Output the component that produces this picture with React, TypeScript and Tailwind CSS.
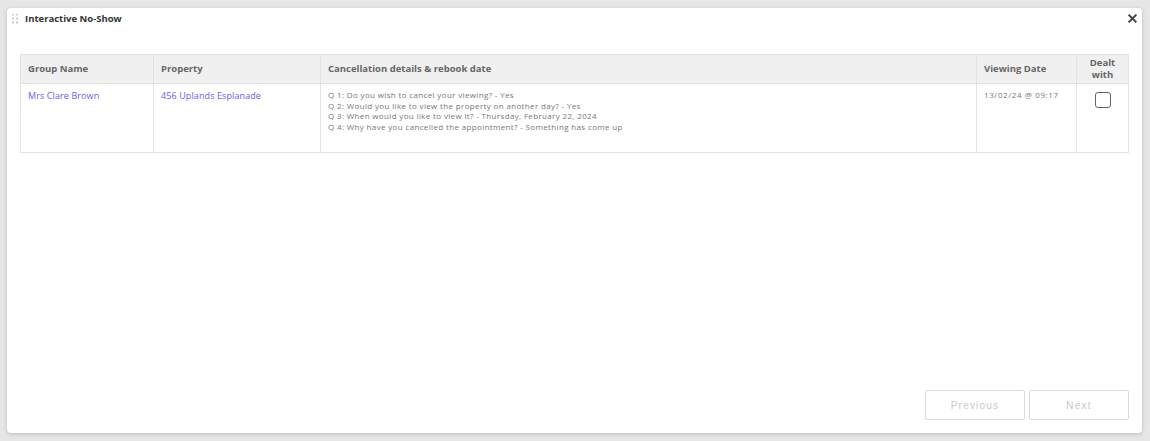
const font = { fontFamily: '"Open Sans", "Noto Sans", sans-serif' };

function DragHandle() {
  return (
    <svg width="6" height="10" viewBox="0 0 6 10" className="mr-[7px]">
      {[0, 1, 2].map((r) =>
        [0, 1].map((c) => (
          <rect key={`${r}-${c}`} x={c * 4} y={r * 4 - 0.5} width="2" height="2" fill="#c8c8c8" />
        ))
      )}
    </svg>
  );
}

const questions = [
  "Q 1: Do you wish to cancel your viewing? - Yes",
  "Q 2: Would you like to view the property on another day? - Yes",
  "Q 3: When would you like to view it? - Thursday, February 22, 2024",
  "Q 4: Why have you cancelled the appointment? - Something has come up",
];

export default function App() {
  return (
    <div className="h-[441px] w-[1150px] bg-[#e6e6e6] pt-[8px] pl-[7px] pr-[8px] pb-[8px]" style={font}>
      <div className="relative flex h-full flex-col rounded-[4px] bg-white px-[13px] shadow-[0_1px_4px_rgba(0,0,0,0.18)]">
        {/* Title bar */}
        <div className="flex h-[20px] items-center pt-[2px] -ml-[8px]">
          <DragHandle />
          <span className="text-[9.5px] font-bold text-[#333]">Interactive No-Show</span>
        </div>
        <button className="absolute right-[3px] top-[3px] flex h-[14px] w-[14px] items-center justify-center">
          <svg width="9" height="9" viewBox="0 0 10 10">
            <path d="M1.5 1.5 L8.5 8.5 M8.5 1.5 L1.5 8.5" stroke="#444" strokeWidth="2.2" strokeLinecap="square" />
          </svg>
        </button>

        {/* Table */}
        <table className="mt-[26px] w-full border-collapse border border-[#e2e2e2] text-left">
          <thead>
            <tr className="h-[29px] bg-[#f0f0f0] text-[9.5px] font-bold text-[#666]">
              <th className="w-[133px] border border-[#e2e2e2] px-[7px] pt-px">Group Name</th>
              <th className="w-[167px] border border-[#e2e2e2] px-[7px] pt-px">Property</th>
              <th className="border border-[#e2e2e2] px-[7px] pt-px">Cancellation details &amp; rebook date</th>
              <th className="w-[100px] border border-[#e2e2e2] px-[7px] pt-px">Viewing Date</th>
              <th className="w-[52px] border border-[#e2e2e2] px-[4px] text-center leading-[12px]">
                Dealt
                <br />
                with
              </th>
            </tr>
          </thead>
          <tbody>
            <tr className="h-[69px] align-top">
              <td className="border border-[#e2e2e2] px-[7px] pt-[5px] text-[9px] tracking-[0.1px] text-[#6d5cf2]">Mrs Clare Brown</td>
              <td className="border border-[#e2e2e2] px-[7px] pt-[5px] text-[9px] tracking-[0.1px] text-[#6d5cf2]">456 Uplands Esplanade</td>
              <td className="border border-[#e2e2e2] px-[7px] pt-[6px] text-[8px] leading-[10.5px] tracking-[0.35px] text-[#777]">
                {questions.map((q) => (
                  <div key={q}>{q}</div>
                ))}
              </td>
              <td className="border border-[#e2e2e2] px-[7px] pt-[5px] text-[8px] tracking-[0.6px] text-[#777]">13/02/24 @ 09:17</td>
              <td className="border border-[#e2e2e2] pt-[8px]">
                <div className="mx-auto h-[16px] w-[16px] rounded-[3px] border-[1.5px] border-[#666] bg-white" />
              </td>
            </tr>
          </tbody>
        </table>

        <div className="flex-1" />

        {/* Pager */}
        <div className="mb-[13px] flex justify-end gap-[4px]">
          <button
            className="h-[30px] w-[100px] rounded-[2px] border border-[#dadada] bg-white text-[10px] tracking-[1.2px] text-[#c8c8c8]"
            style={{ fontFamily: '"Liberation Sans", Arial, sans-serif' }}
          >
            Previous
          </button>
          <button
            className="h-[30px] w-[100px] rounded-[2px] border border-[#dadada] bg-white text-[10px] tracking-[1.2px] text-[#c8c8c8]"
            style={{ fontFamily: '"Liberation Sans", Arial, sans-serif' }}
          >
            Next
          </button>
        </div>
      </div>
    </div>
  );
}
